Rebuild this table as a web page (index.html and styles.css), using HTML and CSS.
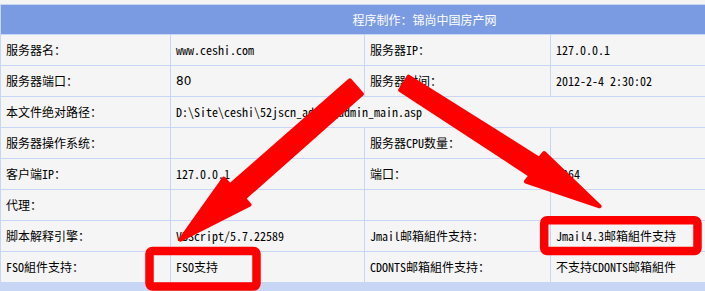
FILE: index.html
```html
<!doctype html>
<html lang="zh-CN">
<head>
  <meta charset="UTF-8">
  <title>服务器信息</title>
  <link rel="stylesheet" href="styles.css">
</head>
<body>
  <div class="wrap">
    <table class="info">
      <colgroup>
        <col class="c1"><col class="c2"><col class="c3"><col class="c4">
      </colgroup>
      <thead>
        <tr><th colspan="4">程序制作：锦尚中国房产网</th></tr>
      </thead>
      <tbody>
        <tr>
          <td>服务器名：</td><td>www.ceshi.com</td>
          <td>服务器IP：</td><td>127.0.0.1</td>
        </tr>
        <tr>
          <td>服务器端口：</td><td class="num">80</td>
          <td>服务器时间：</td><td>2012-2-4 2:30:02</td>
        </tr>
        <tr>
          <td>本文件绝对路径：</td><td colspan="3">D:\Site\ceshi\52jscn_admin\admin_main.asp</td>
        </tr>
        <tr>
          <td>服务器操作系统：</td><td></td>
          <td>服务器CPU数量：</td><td></td>
        </tr>
        <tr>
          <td>客户端IP：</td><td>127.0.0.1</td>
          <td>端口：</td><td>1064</td>
        </tr>
        <tr>
          <td>代理：</td><td></td>
          <td></td><td></td>
        </tr>
        <tr>
          <td>脚本解释引擎：</td><td>VBScript/5.7.22589</td>
          <td>Jmail邮箱組件支持：</td><td>Jmail4.3邮箱組件支持</td>
        </tr>
        <tr>
          <td>FSO組件支持：</td><td>FSO支持</td>
          <td>CDONTS邮箱組件支持：</td><td>不支持CDONTS邮箱組件</td>
        </tr>
      </tbody>
      <tfoot>
        <tr><td colspan="4"></td></tr>
      </tfoot>
    </table>

    <!-- 标注：两个箭头和两个方框 -->
    <svg class="marks" width="705" height="291" viewBox="0 0 705 291">
      <g fill="#ff0000" stroke="#ff0000" stroke-width="4" stroke-linejoin="round">
        <polygon points="349.9,80.3 361.9,94 243.9,198.4 249.5,204.8 180.5,239.7 223.9,178.6 229.9,185.5"/>
        <polygon points="400.2,90 408.6,76.6 539.3,158.9 544.1,153 599.5,206.3 525.9,181.6 530.7,175.5"/>
      </g>
      <g fill="none" stroke="#ff0000" stroke-width="8.5">
        <rect x="149.5" y="251" width="107" height="35.5" rx="3"/>
        <rect x="544.2" y="220.2" width="153.3" height="30.8" rx="3"/>
      </g>
    </svg>
  </div>
</body>
</html>
```

FILE: styles.css
```css
*{margin:0;
  padding:0;}
html,body{overflow:hidden;
          background:#f4f4f4;}
.wrap{position:relative;
      width:705px;
      height:291px;
      padding-top:4px;
      box-sizing:border-box;}
.info{width:843px;
      border-collapse:collapse;
      table-layout:fixed;
      font:12px/14px "Noto Sans Mono CJK SC","Noto Sans CJK SC","Liberation Mono",monospace;
      color:#000;}
.info .c1{width:170px;}
.info .c2{width:194px;}
.info .c3{width:186px;}
.info .c4{width:293px;}
.info th,
.info td{border:1px solid #c8d6f6;
         padding:0 0 0 5px;
         text-align:left;
         vertical-align:middle;
         white-space:nowrap;
         overflow:hidden;}
.info th{height:29px;
         background:#7a9be1;
         color:#fff;
         font-weight:normal;
         text-align:center;}
.info tbody td{height:30px;
               background:#f5f5f5;}
.info .num{font-family:"DejaVu Sans","Noto Sans CJK SC",sans-serif;}
.info tfoot td{height:10px;
               background:#c8d6f6;}
.marks{position:absolute;
       left:0;
       top:0;
       pointer-events:none;}
```
